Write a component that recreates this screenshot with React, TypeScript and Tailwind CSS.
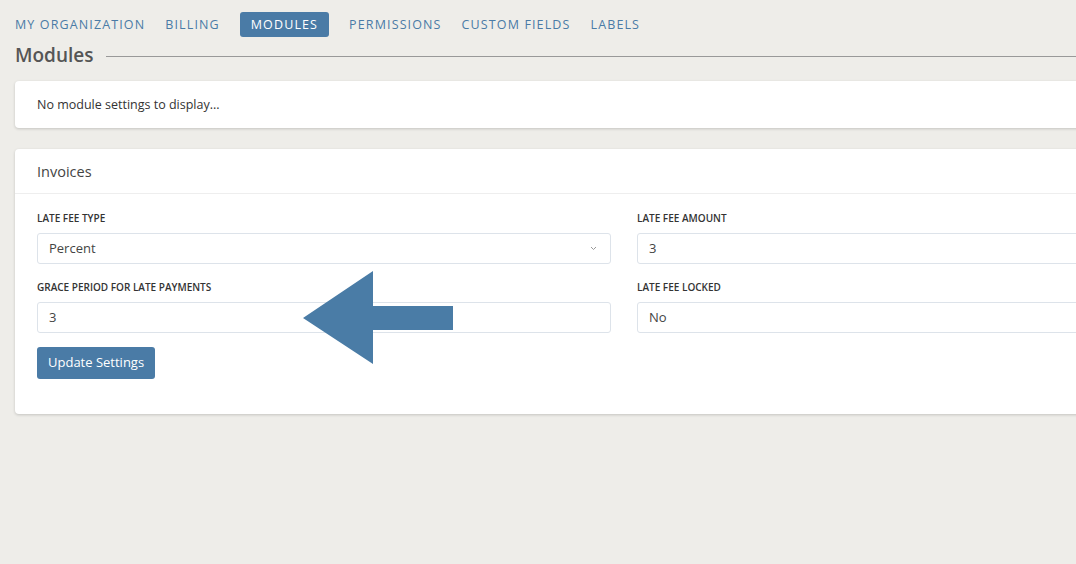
import React from "react"

const tabs = ["My Organization", "Billing", "Modules", "Permissions", "Custom Fields", "Labels"]

function Field({ label, value, select }: { label: string; value: string; select?: boolean }) {
  return (
    <div className="flex flex-col">
      <div className="h-[16px] text-[10px] font-semibold uppercase text-[#333] leading-[16px]">{label}</div>
      <div className="mt-[7px] h-[31px] rounded-[3px] border border-[#dde3ea] bg-white flex items-center justify-between pl-[11px] pr-[13px] text-[13px] text-[#444]">
        <span>{value}</span>
        {select && (
          <svg width="7" height="5" viewBox="0 0 7 5" className="text-[#999]">
            <path d="M1 1l2.5 2.5L6 1" fill="none" stroke="currentColor" strokeWidth="1" />
          </svg>
        )}
      </div>
    </div>
  )
}

export default function App() {
  return (
    <div className="relative w-[1076px] h-[564px] overflow-hidden bg-[#eeede9]" style={{ fontFamily: '"Open Sans", sans-serif' }}>
      {/* Tabs */}
      <div className="flex items-center gap-[20px] pl-[15px] pt-[12px]">
        {tabs.map(t => (
          <div
            key={t}
            className={
              t === "Modules"
                ? "h-[25px] px-[11px] rounded-[3px] bg-[#4a7ba6] text-white flex items-center pt-[1px] text-[12.5px] uppercase tracking-[0.09em]"
                : "h-[25px] flex items-center pt-[1px] text-[12.5px] uppercase tracking-[0.09em] text-[#4a7ba6]"
            }
          >
            {t}
          </div>
        ))}
      </div>

      {/* Heading */}
      <div className="flex items-center pl-[15px] mt-[6px] h-[24px]">
        <div className="text-[19px] font-semibold text-[#555] leading-none">Modules</div>
        <div className="flex-1 ml-[12px] h-[1px] bg-[#999] mt-[2px]" />
      </div>

      {/* Card 1 */}
      <div className="ml-[15px] mt-[14px] w-[1100px] h-[47px] bg-white rounded-[4px] shadow-[0_1px_3px_rgba(0,0,0,0.18)] flex items-center pl-[22px] pt-[1px] text-[12.5px] text-[#333]">
        No module settings to display...
      </div>

      {/* Card 2 */}
      <div className="ml-[15px] mt-[21px] w-[1100px] h-[265px] bg-white rounded-[4px] shadow-[0_1px_3px_rgba(0,0,0,0.18)]">
        <div className="h-[45px] border-b border-[#eeeeee] flex items-center pl-[22px] pt-[1px] text-[14.5px] text-[#444]">Invoices</div>
        <div className="pl-[22px] pt-[16px] grid grid-cols-[574px_500px] gap-x-[26px] gap-y-[15px]">
          <Field label="Late Fee Type" value="Percent" select />
          <Field label="Late Fee Amount" value="3" />
          <Field label="Grace Period for Late Payments" value="3" />
          <Field label="Late Fee Locked" value="No" />
        </div>
        <button className="ml-[22px] mt-[14px] h-[32px] px-[11px] rounded-[3px] bg-[#4a7ba6] text-white text-[13px]">
          Update Settings
        </button>
      </div>

      {/* Arrow annotation */}
      <svg className="absolute left-[303px] top-[270px]" width="151" height="95" viewBox="0 0 151 95">
        <path d="M0 48 L70 1 L70 36 L150 36 L150 60 L70 60 L70 94 Z" fill="#4a7ca6" />
      </svg>
    </div>
  )
}
